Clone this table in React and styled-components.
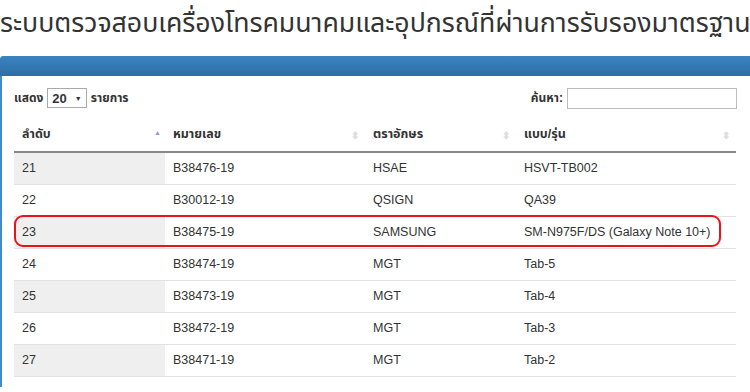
import React from 'react';
import styled, { createGlobalStyle } from 'styled-components';

const GlobalStyle = createGlobalStyle`
  body {
    margin: 0;
    width: 750px;
    height: 392px;
    overflow: hidden;
    background: #fff;
    font-family: "Liberation Sans", "Noto Sans Thai", "Noto Sans", sans-serif;
    color: #333;
  }
`;

const Title = styled.h1`
  margin: 0;
  padding: 8px 0 0 0;
  font-family: "Noto Sans Thai", "Noto Sans", "DejaVu Sans", sans-serif;
  font-size: 26.7px;
  font-weight: 400;
  line-height: 32px;
  height: 32px;
  white-space: nowrap;
  color: #333;
`;

const Panel = styled.div`
  margin-top: 16px;
  width: 770px;
  border-left: 2px solid #428bca;
  border-radius: 4px 0 0 0;
  height: 331px;
`;

const PanelHeading = styled.div`
  height: 20px;
  margin-left: -2px;
  background: linear-gradient(#3a84c2, #2e6da4);
  border-radius: 4px 0 0 0;
`;

const PanelBody = styled.div`
  padding: 10px 0 0 12px;
  width: 722px;
`;

const Controls = styled.div`
  display: flex;
  justify-content: space-between;
  align-items: center;
  height: 24px;
  font-size: 12px;
  font-weight: bold;
`;

const Label = styled.label`
  display: flex;
  align-items: center;
  gap: 4px;
`;

const Select = styled.span`
  display: inline-flex;
  align-items: center;
  gap: 8px;
  height: 18px;
  padding: 0 4px;
  border: 1px solid #a9a9a9;
  font-size: 13px;
  font-weight: bold;
  &::after {
    content: '▼';
    font-size: 7px;
  }
`;

const SearchInput = styled.input`
  box-sizing: border-box;
  width: 170px;
  height: 21px;
  border: 1px solid #bbb;
  margin: 0 -1px 0 0;
`;

const TableWrap = styled.div`
  position: relative;
  padding-top: 9px;
`;

const Table = styled.table`
  width: 722px;
  border-collapse: collapse;
  table-layout: fixed;
  font-size: 12.5px;
`;

const Th = styled.th`
  position: relative;
  text-align: left;
  font-weight: bold;
  padding: 8px 8px 9px 8px;
  line-height: 15px;
  height: 15px;
  border-bottom: 2px solid #888;
  &::after {
    content: '${(p) => (p.$active ? '▲' : '⬍')}';
    position: absolute;
    right: ${(p) => (p.$active ? '4px' : '6px')};
    top: ${(p) => (p.$active ? '6px' : '9px')};
    font-size: ${(p) => (p.$active ? '7px' : '10px')};
    color: ${(p) => (p.$active ? '#8a9ad6' : '#ddd')};
  }
`;

const Td = styled.td`
  padding: 8px 8px;
  height: 15px;
  line-height: 15px;
  border-bottom: 1px solid #e2e2e2;
  background: ${(p) => (p.$shade ? '#efefef' : '#fff')};
`;

const Highlight = styled.div`
  position: absolute;
  left: 0;
  top: 105px;
  width: 703px;
  height: 28px;
  border: 2px solid #e8141b;
  border-radius: 9px;
  pointer-events: none;
`;

const rows = [
  ['21', 'B38476-19', 'HSAE', 'HSVT-TB002'],
  ['22', 'B30012-19', 'QSIGN', 'QA39'],
  ['23', 'B38475-19', 'SAMSUNG', 'SM-N975F/DS (Galaxy Note 10+)'],
  ['24', 'B38474-19', 'MGT', 'Tab-5'],
  ['25', 'B38473-19', 'MGT', 'Tab-4'],
  ['26', 'B38472-19', 'MGT', 'Tab-3'],
  ['27', 'B38471-19', 'MGT', 'Tab-2'],
];

const App = () => (
  <>
    <GlobalStyle />
    <Title>ระบบตรวจสอบเครื่องโทรคมนาคมและอุปกรณ์ที่ผ่านการรับรองมาตรฐาน</Title>
    <Panel>
      <PanelHeading />
      <PanelBody>
        <Controls>
          <Label>
            แสดง <Select>20</Select> รายการ
          </Label>
          <Label>
            ค้นหา: <SearchInput />
          </Label>
        </Controls>
        <TableWrap>
          <Table>
            <colgroup>
              <col style={{ width: 151 }} />
              <col style={{ width: 200 }} />
              <col style={{ width: 151 }} />
              <col style={{ width: 220 }} />
            </colgroup>
            <thead>
              <tr>
                <Th $active>ลำดับ</Th>
                <Th>หมายเลข</Th>
                <Th>ตราอักษร</Th>
                <Th>แบบ/รุ่น</Th>
              </tr>
            </thead>
            <tbody>
              {rows.map((r, i) => (
                <tr key={r[0]}>
                  <Td $shade={i % 2 === 0}>{r[0]}</Td>
                  <Td>{r[1]}</Td>
                  <Td>{r[2]}</Td>
                  <Td>{r[3]}</Td>
                </tr>
              ))}
            </tbody>
          </Table>
          <Highlight />
        </TableWrap>
      </PanelBody>
    </Panel>
  </>
);

export default App;
